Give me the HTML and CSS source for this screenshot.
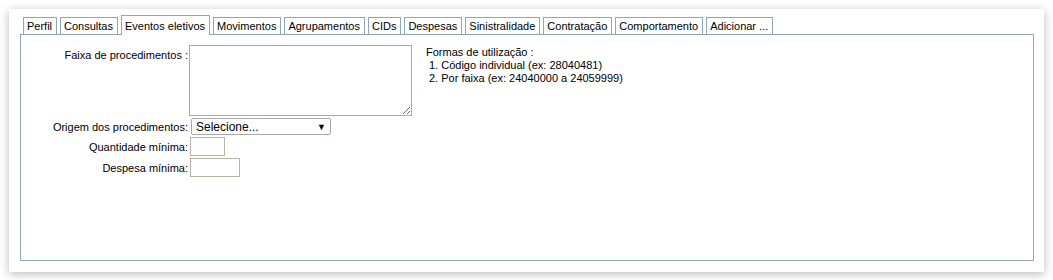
FILE: index.html
```html
<!DOCTYPE html>
<html lang="pt-BR">
<head>
    <meta charset="UTF-8">
    <meta name="viewport" content="width=device-width, initial-scale=1.0">
    <title>Eventos eletivos</title>
    <link rel="stylesheet" href="styles.css">
</head>
<body>

    <div class="card">
        <ul class="tabs">
            <li class="tab">Perfil</li>
            <li class="tab">Consultas</li>
            <li class="tab active">Eventos eletivos</li>
            <li class="tab">Movimentos</li>
            <li class="tab">Agrupamentos</li>
            <li class="tab">CIDs</li>
            <li class="tab">Despesas</li>
            <li class="tab">Sinistralidade</li>
            <li class="tab">Contratação</li>
            <li class="tab">Comportamento</li>
            <li class="tab">Adicionar ...</li>
        </ul>

        <div class="panel">
            <form class="filter-form">
                <label class="field-label label-top" for="faixa">Faixa de procedimentos :</label>
                <textarea id="faixa" class="range-box"></textarea>

                <label class="field-label" for="origem">Origem dos procedimentos:</label>
                <div class="select-box" id="origem">
                    <span>Selecione...</span>
                    <span class="arrow">&#9660;</span>
                </div>

                <label class="field-label" for="qtd">Quantidade mínima:</label>
                <input id="qtd" class="text-input qty" type="text">

                <label class="field-label" for="despesa">Despesa mínima:</label>
                <input id="despesa" class="text-input money" type="text">
            </form>

            <div class="help">
                <div>Formas de utilização :</div>
                <div class="help-item">1. Código individual (ex: 28040481)</div>
                <div class="help-item">2. Por faixa (ex: 24040000 a 24059999)</div>
            </div>
        </div>
    </div>

</body>
</html>
```

FILE: styles.css
```css
body {
    margin: 0;
    padding: 9px;
    background-color: #fff;
    font-family: "Liberation Sans", Arial, sans-serif;
    font-size: 11px;
    color: #000;
}
.card {
    background-color: #fff;
    box-shadow: 0 2px 9px rgba(0, 0, 0, 0.28);
    padding: 6px 10px 11px 11px;
}
.tabs {
    list-style: none;
    margin: 0 0 0 3px;
    padding: 0;
    display: flex;
    align-items: flex-end;
    gap: 3px;
    position: relative;
    z-index: 1;
}
.tab {
    border: 1px solid #8fa8b8;
    border-bottom: none;
    height: 16px;
    line-height: 16px;
    padding: 0 4px 0 3px;
    background-color: #fff;
}
.tab.active {
    height: 19px;
    line-height: 20px;
    margin-bottom: -1px;
}
.panel {
    border: 1px solid #8fa8b8;
    height: 215px;
    padding-top: 10px;
    display: flex;
    gap: 14px;
}
.filter-form {
    display: grid;
    grid-template-columns: 168px auto;
    row-gap: 2px;
    align-items: center;
    align-content: start;
}
.field-label {
    text-align: right;
    padding-right: 1px;
}
.label-top {
    align-self: start;
    padding-top: 4px;
}
.range-box {
    width: 219px;
    height: 67px;
    margin: 0;
    padding: 1px;
    border: 1px solid #a9a9a9;
    resize: both;
    font: inherit;
}
.select-box {
    width: 130px;
    height: 15px;
    margin-left: 2px;
    border: 1px solid #a9a9a9;
    border-radius: 2px;
    padding: 0 4px;
    display: flex;
    justify-content: space-between;
    align-items: center;
    font-size: 12px;
}
.arrow {
    font-size: 9px;
}
.text-input {
    margin: 0 0 0 1px;
    padding: 0;
    border: 1px solid #b8b2a3;
    box-sizing: border-box;
    height: 19px;
    font: inherit;
}
.qty {
    width: 35px;
}
.money {
    width: 50px;
}
.help {
    padding-top: 1px;
    line-height: 13px;
}
.help-item {
    padding-left: 3px;
}
```
